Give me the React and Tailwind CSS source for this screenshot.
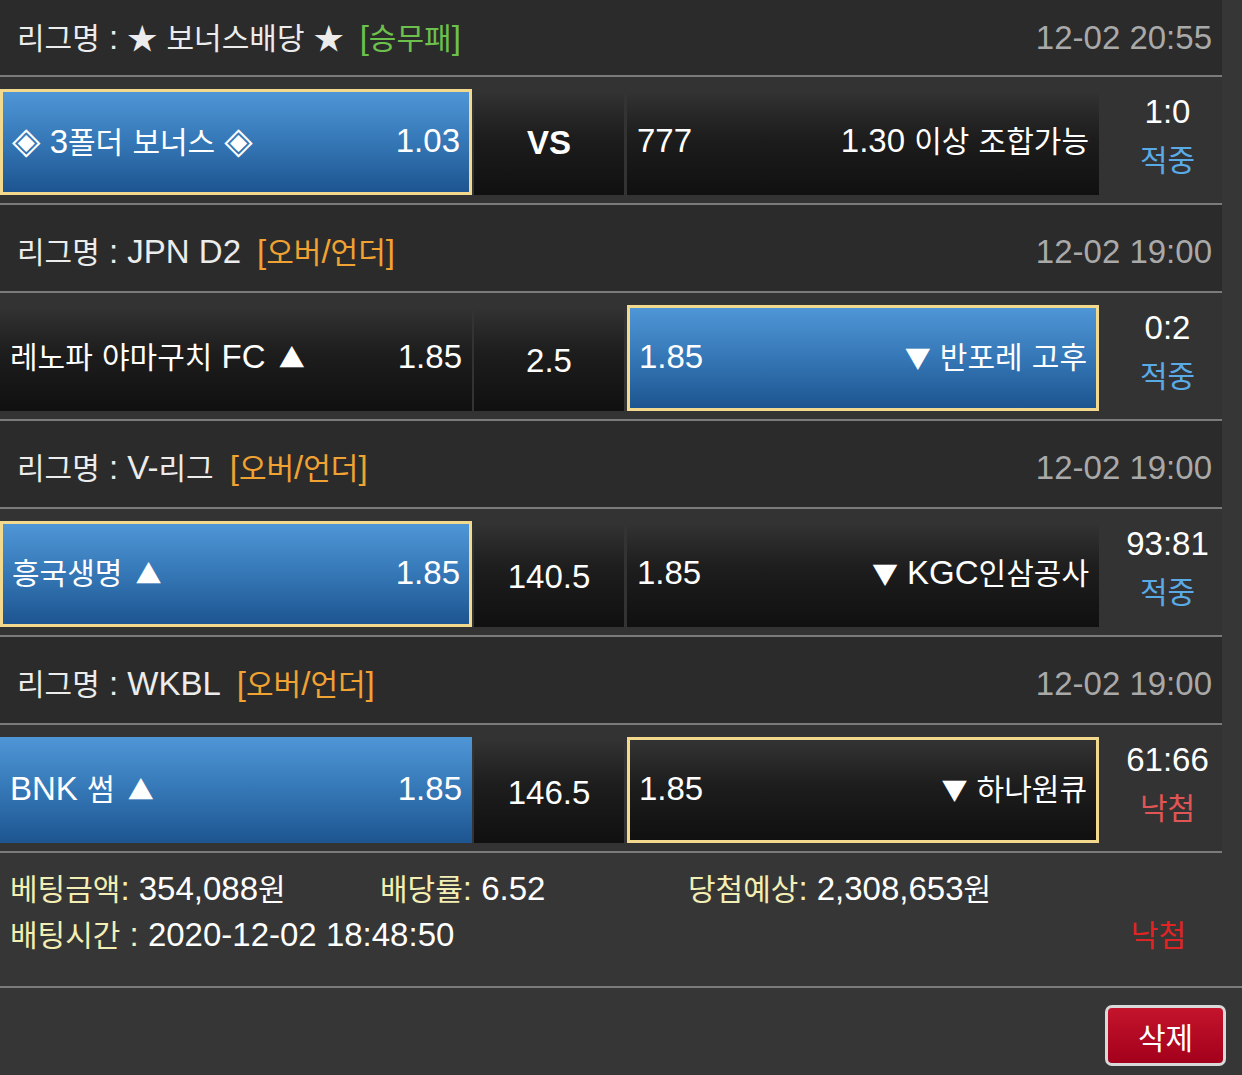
import React from "react";

const matches = [
  {
    league: "★ 보너스배당 ★",
    type: "[승무패]",
    typeCls: "text-[#6cc04c]",
    date: "12-02 20:55",
    home: { l: "◈ 3폴더 보너스 ◈", r: "1.03", v: "blueBorder" },
    mid: "VS",
    midBold: true,
    away: { l: "777", r: "1.30 이상 조합가능", v: "dark" },
    score: "1:0",
    result: "적중",
    win: true,
  },
  {
    league: "JPN D2",
    type: "[오버/언더]",
    typeCls: "text-[#f0a232]",
    date: "12-02 19:00",
    home: { l: "레노파 야마구치 FC ▲", r: "1.85", v: "dark" },
    mid: "2.5",
    away: { l: "1.85", r: "▼ 반포레 고후", v: "blueBorder" },
    score: "0:2",
    result: "적중",
    win: true,
  },
  {
    league: "V-리그",
    type: "[오버/언더]",
    typeCls: "text-[#f0a232]",
    date: "12-02 19:00",
    home: { l: "흥국생명 ▲", r: "1.85", v: "blueBorder" },
    mid: "140.5",
    away: { l: "1.85", r: "▼ KGC인삼공사", v: "dark" },
    score: "93:81",
    result: "적중",
    win: true,
  },
  {
    league: "WKBL",
    type: "[오버/언더]",
    typeCls: "text-[#f0a232]",
    date: "12-02 19:00",
    home: { l: "BNK 썸 ▲", r: "1.85", v: "blue" },
    mid: "146.5",
    away: { l: "1.85", r: "▼ 하나원큐", v: "darkBorder" },
    score: "61:66",
    result: "낙첨",
    win: false,
  },
];

const SPLIT = /([\uAC00-\uD7A3\u2605]+|[\u25B2\u25BC]|\u25C8)/;
const HANGUL = /[\uAC00-\uD7A3\u2605]/;

function T({ s }) {
  const parts = s.split(SPLIT);
  return (
    <>
      {parts.map((p, i) => {
        if (p === "" || p === undefined) return null;
        if (p === "▲")
          return (
            <span key={i} className="ml-[4px] text-[26px] font-['Noto_Sans_CJK_KR',sans-serif]">
              {p}
            </span>
          );
        if (p === "▼")
          return (
            <span key={i} className="text-[26px] font-['Noto_Sans_CJK_KR',sans-serif]">
              {p}
            </span>
          );
        if (p === "◈")
          return (
            <span key={i} className="text-[37px] leading-none font-['DejaVu_Sans','Noto_Sans_CJK_KR',sans-serif]">
              {p}
            </span>
          );
        if (HANGUL.test(p))
          return (
            <span key={i} className="text-[30px] font-['Noto_Sans_CJK_KR',sans-serif]">
              {p}
            </span>
          );
        return <React.Fragment key={i}>{p}</React.Fragment>;
      })}
    </>
  );
}

const variantCls = {
  blueBorder:
    "bg-[linear-gradient(to_bottom,#4f96d6_0%,#3577b6_50%,#1d5590_100%)] border-[3px] border-[#f2d98e] px-[9px]",
  blue:
    "bg-[linear-gradient(to_bottom,#4f96d6_0%,#3577b6_50%,#1d5590_100%)] px-[10px]",
  dark:
    "bg-[linear-gradient(to_bottom,#343434_0%,#1d1d1d_45%,#101010_100%)] px-[10px]",
  darkBorder:
    "bg-[linear-gradient(to_bottom,#343434_0%,#1d1d1d_45%,#101010_100%)] border-[3px] border-[#f2d98e] px-[9px]",
};

function Cell({ c }) {
  return (
    <div
      className={
        "w-[472px] h-[106px] pb-[3px] flex items-center justify-between text-white text-[33px] leading-none " +
        variantCls[c.v]
      }
    >
      <span className="whitespace-nowrap">
        <T s={c.l} />
      </span>
      <span className="whitespace-nowrap">
        <T s={c.r} />
      </span>
    </div>
  );
}

function Line() {
  return <div className="h-[2px] bg-[#7b7b7b]" />;
}

function Block({ m, first }) {
  return (
    <div>
      <div
        className={
          "bg-[#2b2b2b] flex items-center justify-between pl-[17px] pr-[10px] " +
          (first ? "h-[75px] pb-[1px]" : "h-[86px] pt-[7px]")
        }
      >
        <div className="flex items-center text-[33px] leading-none whitespace-nowrap">
          <span className="text-[#ececec]">
            <T s={"리그명 : " + m.league} />
          </span>
          <span className={"ml-[16px] " + m.typeCls}>
            <T s={m.type} />
          </span>
        </div>
        <span className="text-[33px] leading-none text-[#a9a9a9]">{m.date}</span>
      </div>
      <Line />
      <div className="h-[126px] bg-[#333333] pt-[12px] flex">
        <Cell c={m.home} />
        <div
          className={
            "ml-[2px] w-[150px] h-[106px] flex items-center justify-center text-white leading-none bg-[linear-gradient(to_bottom,#343434_0%,#1d1d1d_45%,#101010_100%)] " +
            (m.midBold ? "font-bold text-[33px]" : "text-[33px] pt-[4px]")
          }
        >
          {m.mid}
        </div>
        <div className="ml-[3px]">
          <Cell c={m.away} />
        </div>
        <div className="flex-1 h-[106px] pl-[14px] flex flex-col items-center text-[33px] leading-[46px]">
          <span className="text-white">{m.score}</span>
          <span
            className={
              "text-[30px] font-['Noto_Sans_CJK_KR',sans-serif] leading-[46px] " +
              (m.win ? "text-[#5aaae6]" : "text-[#e05555]")
            }
          >
            {m.result}
          </span>
        </div>
      </div>
      <Line />
    </div>
  );
}

export default function App() {
  return (
    <div className="w-[1242px] h-[1075px] overflow-hidden bg-[#363636] font-['Liberation_Sans','Noto_Sans_CJK_KR',sans-serif]">
      <div className="w-[1222px]">
        {matches.map((m, i) => (
          <Block key={i} m={m} first={i === 0} />
        ))}
      </div>
      <div className="w-[1222px] h-[133px] pl-[10px] pr-[36px] pt-[12px] text-[33px] leading-[45px] whitespace-nowrap">
        <div className="flex">
          <span className="w-[370px]">
            <span className="text-[#f3eeb4]">
              <T s="베팅금액:" />
            </span>
            <span className="text-white">
              <T s=" 354,088원" />
            </span>
          </span>
          <span className="w-[308px]">
            <span className="text-[#f3eeb4]">
              <T s="배당률:" />
            </span>
            <span className="text-white"> 6.52</span>
          </span>
          <span>
            <span className="text-[#f3eeb4]">
              <T s="당첨예상:" />
            </span>
            <span className="text-white">
              <T s=" 2,308,653원" />
            </span>
          </span>
        </div>
        <div className="flex justify-between">
          <span>
            <span className="text-[#f3eeb4]">
              <T s="배팅시간 :" />
            </span>
            <span className="text-white"> 2020-12-02 18:48:50</span>
          </span>
          <span className="text-[#e02424]">
            <T s="낙첨" />
          </span>
        </div>
      </div>
      <div className="h-[2px] bg-[#7b7b7b]" />
      <div className="flex justify-end pr-[16px] pt-[17px]">
        <button className="w-[121px] h-[61px] rounded-[7px] border-[3px] border-[#d9d9d9] bg-[linear-gradient(to_bottom,#c4142c,#a3001c)] text-white text-[30px] leading-none flex items-center justify-center font-['Noto_Sans_CJK_KR',sans-serif]">
          삭제
        </button>
      </div>
    </div>
  );
}
